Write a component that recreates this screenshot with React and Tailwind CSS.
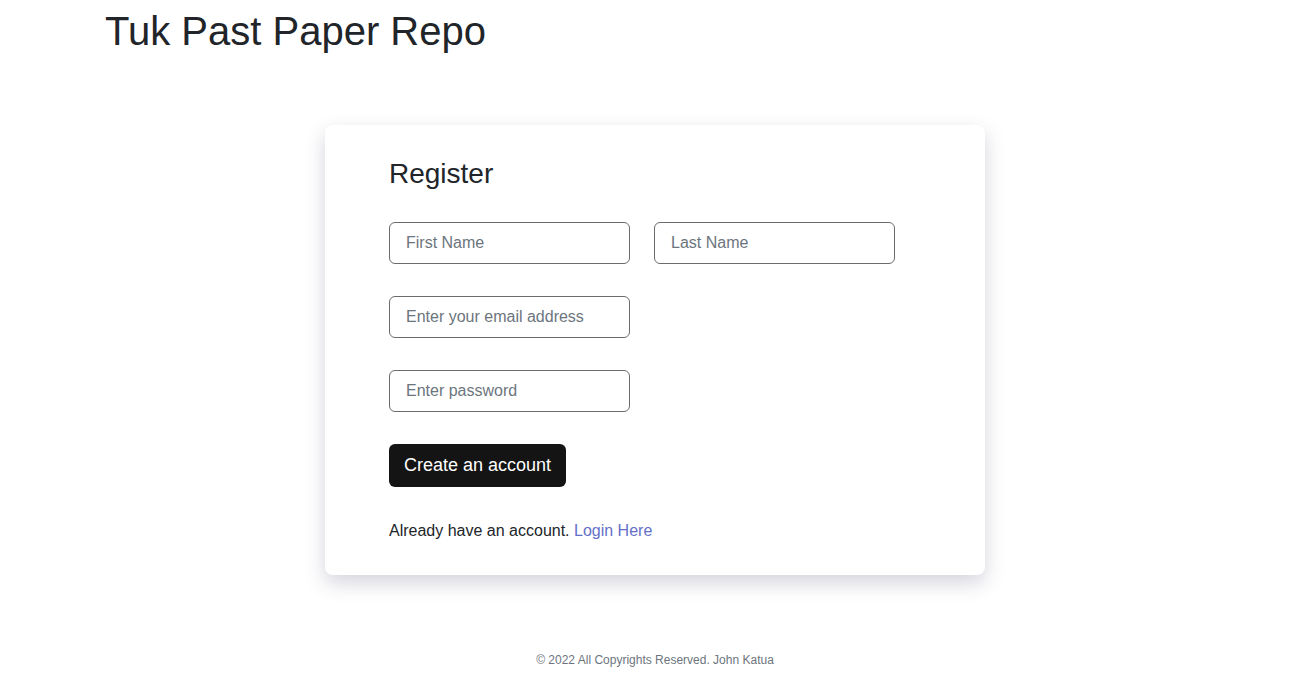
import React from 'react';

export default function App() {
    return (
        <div className="min-h-screen bg-white text-[#212529] font-['Liberation_Sans',Arial,sans-serif]">
            <header className="px-[105px] pt-[7px]">
                <h1 className="text-[40px] leading-[1.2]">Tuk Past Paper Repo</h1>
            </header>

            <main className="flex justify-center pt-[70px]">
                <div className="w-[660px] h-[450px] bg-white rounded-lg shadow-[0_8px_20px_rgba(60,60,100,0.22)] px-16 pt-[32px]">
                    <h3 className="text-[28px] leading-[1.2]">Register</h3>

                    <form className="mt-[31px] flex flex-col gap-8" onSubmit={e => e.preventDefault()}>
                        <div className="flex gap-6">
                            <input
                                type="text"
                                placeholder="First Name"
                                className="w-[241px] h-[42px] px-4 text-base border border-[#6b6b6b] rounded-md placeholder:text-[#6c757d] outline-none"
                            />
                            <input
                                type="text"
                                placeholder="Last Name"
                                className="w-[241px] h-[42px] px-4 text-base border border-[#6b6b6b] rounded-md placeholder:text-[#6c757d] outline-none"
                            />
                        </div>
                        <input
                            type="email"
                            placeholder="Enter your email address"
                            className="w-[241px] h-[42px] px-4 text-base border border-[#6b6b6b] rounded-md placeholder:text-[#6c757d] outline-none"
                        />
                        <input
                            type="password"
                            placeholder="Enter password"
                            className="w-[241px] h-[42px] px-4 text-base border border-[#6b6b6b] rounded-md placeholder:text-[#6c757d] outline-none"
                        />
                        <div>
                            <button
                                type="submit"
                                className="h-[43px] px-[15px] bg-[#141414] text-white text-lg rounded-md"
                            >
                                Create an account
                            </button>
                        </div>
                    </form>

                    <p className="mt-[32px] text-base">
                        Already have an account. <a href="#" className="text-[#6470c8]">Login Here</a>
                    </p>
                </div>
            </main>

            <footer className="mt-[77px] text-center text-xs text-[#6c757d]">
                © 2022 All Copyrights Reserved. John Katua
            </footer>
        </div>
    );
}
